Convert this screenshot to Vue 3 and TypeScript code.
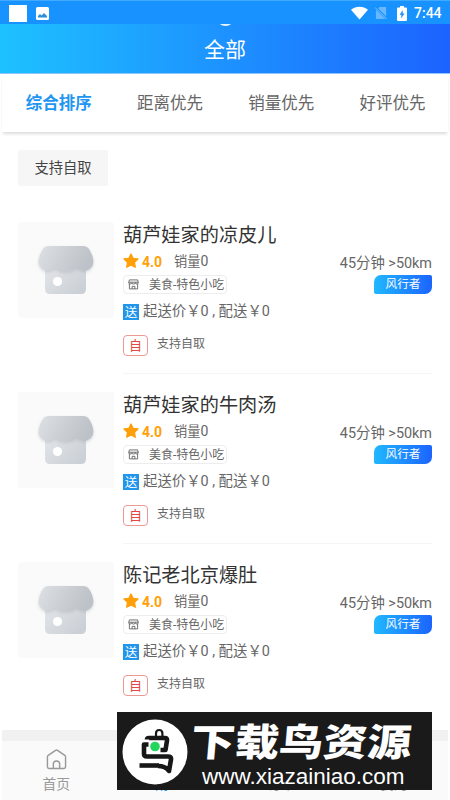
<script setup lang="ts">
interface Shop { name: string; rating: string; sales: number; category: string }

const sorts: string[] = ['综合排序', '距离优先', '销量优先', '好评优先']
const shops: Shop[] = [
  { name: '葫芦娃家的凉皮儿', rating: '4.0', sales: 0, category: '美食-特色小吃' },
  { name: '葫芦娃家的牛肉汤', rating: '4.0', sales: 0, category: '美食-特色小吃' },
  { name: '陈记老北京爆肚', rating: '4.0', sales: 0, category: '美食-特色小吃' },
]
const navs: string[] = ['首页', '附近', '订单', '我的']
</script>

<template>
  <div class="screen">
    <div class="status">
      <span class="app-square"></span>
      <svg class="picture" viewBox="0 0 13 13"><rect width="13" height="13" rx="1.5" fill="#fff" /><path d="M2 10.5V9l2-2 1.500 1.500L8 6l3 3v1.500z" fill="#2c8fdc" /></svg>
      <span class="grow"></span>
      <svg class="wifi" viewBox="0 0 18 14"><path d="M0 3.500C5-.8 13-.8 18 3.500L9 14z" fill="#fff" /></svg>
      <svg class="sim" viewBox="0 0 14 15"><path d="M5 1h7v13H1V5z" fill="#68b8ff" /><path d="M0 1l13 13" stroke="#1690fc" stroke-width="2.600" /><path d="M0 1.500l12.500 12.500" stroke="#8acaff" stroke-width="1" /></svg>
      <svg class="battery" viewBox="0 0 10 15"><path d="M3 0h4v1.500h2q1 0 1 1V14q0 1-1 1H1q-1 0-1-1V2.500q0-1 1-1h2z" fill="#fff" /><path d="M6 4L2.500 8.700h2L4 12.500l3.600-5h-2z" fill="#1690fc" /></svg>
      <span class="time">7:44</span>
    </div>
    <header class="header"><span class="spinner"></span>全部</header>
    <nav class="sorts">
      <span v-for="(s, i) in sorts" :key="s" :class="{ active: i === 0 }">{{ s }}</span>
    </nav>
    <main class="content">
      <button class="filter">支持自取</button>
      <article v-for="shop in shops" :key="shop.name" class="shop">
        <div class="thumb">
          <svg viewBox="0 0 96 96">
            <defs>
              <linearGradient id="roof" x1="0" x2="1" y1="0" y2=".25"><stop offset="0" stop-color="#dde0e3" /><stop offset="1" stop-color="#bdc2c8" /></linearGradient>
              <linearGradient id="wall" x1="0" x2="1" y1="0" y2=".7"><stop offset="0" stop-color="#e3e6e9" /><stop offset="1" stop-color="#cbd0d6" /></linearGradient>
              <filter id="shade" x="-20%" y="-20%" width="140%" height="160%"><feDropShadow dx="0" dy="1.500" stdDeviation="1.500" flood-color="#a6adb5" flood-opacity=".45" /></filter>
            </defs>
            <path d="M27 44h41v23q0 5-5 5H32q-5 0-5-5z" fill="url(#wall)" />
            <path d="M31 24h34q4 0 6 3 4 6 4.500 12.500Q75 46 69 48.500 64 50 58.500 46 54 49.500 47.500 49.500 42 49.500 37.500 46 32 50 27 48.500 21 46 20.500 39.500 21 33 25 27 27 24 31 24z" fill="url(#roof)" filter="url(#shade)" />
            <circle cx="39.500" cy="59.500" r="4.600" fill="#fff" />
          </svg>
        </div>
        <div class="info">
          <h2>{{ shop.name }}</h2>
          <div class="stats">
            <svg class="star" viewBox="0 0 16 16"><path d="M8 1l2.100 4.300 4.900.7-3.500 3.400.8 4.900L8 12l-4.300 2.300.8-4.900L1 6l4.900-.7z" fill="#ff9f0a" stroke="#ff9f0a" stroke-width="1.300" stroke-linejoin="round" /></svg>
            <b>{{ shop.rating }}</b>
            <span class="sales">销量<span class="count">{{ shop.sales }}</span></span>
          </div>
          <div class="category">
            <svg viewBox="0 0 12 12" fill="none" stroke="#555" stroke-width=".9"><path d="M1.500 1h9l.7 3q0 1.500-1.500 1.500T8 4q0 1.500-2 1.500T4 4q0 1.500-1.700 1.500T.8 4zM1.500 5.500v5.300h9V5.500M4.500 10.800V8h3v2.800M.8 3.500h10.400" /></svg>
            <span>{{ shop.category }}</span>
          </div>
          <div class="fee"><i>送</i><span>起送价￥0 , 配送￥0</span></div>
          <div class="pickup"><i>自</i><span>支持自取</span></div>
        </div>
        <div class="delivery">
          <span>45分钟 &gt;50km</span>
          <em>风行者</em>
        </div>
      </article>
    </main>
    <footer class="bottom">
      <div v-for="(n, i) in navs" :key="n" class="nav" :class="{ current: i === 1 }">
        <svg viewBox="0 0 22 22" fill="none" stroke="currentColor" stroke-width="1.500" stroke-linejoin="round"><path d="M1.500 8.200q0-1 .8-1.600L10 1.400q1-.7 2 0l7.700 5.200q.8.600.8 1.600v10.500q0 1.800-1.800 1.800H3.300q-1.800 0-1.800-1.800zM7.700 20.500v-4.700q0-3.300 3.300-3.300t3.300 3.300v4.700" /></svg>
        <span>{{ n }}</span>
      </div>
    </footer>
    <div class="watermark">
      <svg class="bird" viewBox="0 0 66 66">
        <circle cx="33" cy="33" r="32.500" fill="#fff" />
        <g fill="none" stroke="#171717" stroke-width="4.600" stroke-linejoin="round">
          <path d="M34 18v-3.500q0-3.500 3.200-3.500t3.200 3.500V18" stroke-width="2.200" />
          <path d="M25 20.500q0-1.500 2-1.500h16q2.500 0 2 2.500L43.500 31h-5" />
          <path d="M26.500 25.500H22V35q0 2.500 3 2.500h21q3.500 0 3 3L47 52q-3.500-5-11-5" />
          <path d="M17.500 46.500H37" />
        </g>
        <circle cx="33" cy="27.500" r="4.800" fill="#20d65b" />
      </svg>
      <div class="brand"><strong>下载鸟资源</strong><span>www.xiazainiao.com</span></div>
    </div>
  </div>
</template>

<style>
body { margin: 0; background: #fff; }
</style>

<style scoped>
* { box-sizing: border-box; }
.screen { position: relative; width: 450px; height: 800px; overflow: hidden; display: flex; flex-direction: column; background: #fff; color: #666; font-family: Roboto, "Noto Sans CJK SC", sans-serif; }
.status { height: 24px; flex: none; display: flex; align-items: center; padding: 1px 8px 0 9px; background: #1792ff; border-top: 1px solid #40aaff; color: #fff; }
.app-square { width: 18px; height: 17px; background: #fff; }
.picture { width: 13px; height: 13px; margin-left: 9px; }
.grow { flex: 1; }
.wifi { width: 17px; height: 14px; margin-right: 7px; }
.sim { width: 13px; height: 14px; margin-right: 9px; }
.battery { width: 10px; height: 15px; margin-right: 7px; }
.time { font: 500 14px/20px Roboto, sans-serif; width: 28px; white-space: nowrap; }
.header { position: relative; height: 50px; flex: none; padding-top: 2px; background: linear-gradient(90deg, #1ec1ff, #1c63ff); border-bottom: 1px solid #8dc5ff; color: #fff; font-size: 21px; line-height: 49px; text-align: center; overflow: hidden; }
.spinner { position: absolute; left: 216px; top: -18px; width: 19px; height: 20px; border-radius: 50%; background: #e9f5ff; }
.sorts { height: 58px; flex: none; display: grid; grid-template-columns: repeat(4, 111.300px); margin: 0 2px; padding-left: 1px; box-shadow: 0 3px 3px -1px rgba(0, 0, 0, .14); font-size: 16.500px; line-height: 60px; text-align: center; }
.sorts .active { color: #2095f2; font-weight: 700; }
.content { flex: 1; min-height: 0; overflow: hidden; padding: 18px 18px 0; display: flex; flex-direction: column; align-items: stretch; }
.filter { flex: none; width: 90px; height: 36px; padding: 0; border: 0; border-radius: 2px; background: #f6f6f6; color: #444; font: 14.300px/35px Roboto, "Noto Sans CJK SC", sans-serif; margin-bottom: 36px; }
.shop { height: 170px; flex: none; display: grid; grid-template-columns: 96px 1fr 100px; column-gap: 9px; }
.thumb { width: 96px; height: 96px; background: #fafafa; border-radius: 3px; }
.thumb svg { display: block; width: 96px; height: 96px; }
.info { height: 152px; min-width: 0; border-bottom: 1px solid #f5f5f5; white-space: nowrap; }
h2 { margin: 0; height: 26px; color: #333; font-size: 19.200px; font-weight: 400; line-height: 27px; }
.stats { height: 27px; display: flex; align-items: center; font-size: 13.200px; line-height: 26px; }
.star { width: 16px; height: 16px; margin-right: 3px; margin-top: -2px; }
.stats b { color: #ff9f0a; font-size: 14px; letter-spacing: -.1px; width: 32px; }
.count { font-size: 14px; }
.category { width: 104px; height: 19px; display: flex; align-items: center; padding-left: 4px; border: 1px solid #ededed; border-radius: 4px; font-size: 12px; line-height: 19px; }
.category svg { width: 11px; height: 11px; margin-right: 10px; }
.category span { height: 18px; }
.fee { display: flex; align-items: center; height: 36px; font-size: 14.400px; line-height: 38px; }
.fee i { display: grid; place-items: center; width: 16px; height: 16px; padding-top: 1px; background: #2095e9; color: #fff; font-size: 12.500px; font-style: normal; line-height: 0; margin-right: 4px; }
.pickup { display: flex; align-items: flex-start; margin-top: 5px; font-size: 12px; }
.pickup i { width: 25px; height: 21px; border: 1px solid #eb9995; border-radius: 4px; color: #e34742; font-size: 13px; font-style: normal; line-height: 19px; text-align: center; margin-right: 9px; }
.pickup span { line-height: 18px; }
.delivery { height: 152px; display: flex; flex-direction: column; align-items: flex-end; padding-top: 32px; margin-left: -9px; border-bottom: 1px solid #f5f5f5; white-space: nowrap; }
.delivery span { font-size: 14.400px; line-height: 20px; }
.delivery em { width: 58px; height: 19px; margin-top: 1px; border-radius: 7px 2px 7px 2px; background: linear-gradient(90deg, #20b8ff, #1c64ff); color: #fff; font-size: 11.700px; font-style: normal; line-height: 18px; text-align: center; }
.bottom { height: 70px; flex: none; margin: 0 2px; border-top: 11px solid #f1f1f1; background: #fafafa; display: grid; grid-template-columns: repeat(4, 112.500px); }
.nav { display: flex; flex-direction: column; align-items: center; padding: 8px 4px 0 0; color: #999; font-size: 13.800px; }
.nav svg { width: 21px; height: 21px; }
.nav span { line-height: 20px; margin-top: 4px; }
.nav.current { color: #2095e9; }
.watermark { position: absolute; left: 117px; top: 712px; width: 315px; height: 78px; background: #1a1a1a; display: flex; align-items: center; padding-left: 5px; color: #fff; }
.bird { width: 66px; height: 66px; flex: none; margin-top: 2px; }
.brand { display: flex; flex-direction: column; align-items: flex-start; white-space: nowrap; padding-top: 10px; }
.brand strong { margin-left: 3px; font-size: 38px; font-weight: 900; line-height: 40px; height: 40px; transform: skewX(-5deg) scaleX(1.160); transform-origin: left center; }
.brand span { margin-left: 14px; font: 22.500px/27px "Liberation Sans", sans-serif; }
</style>
